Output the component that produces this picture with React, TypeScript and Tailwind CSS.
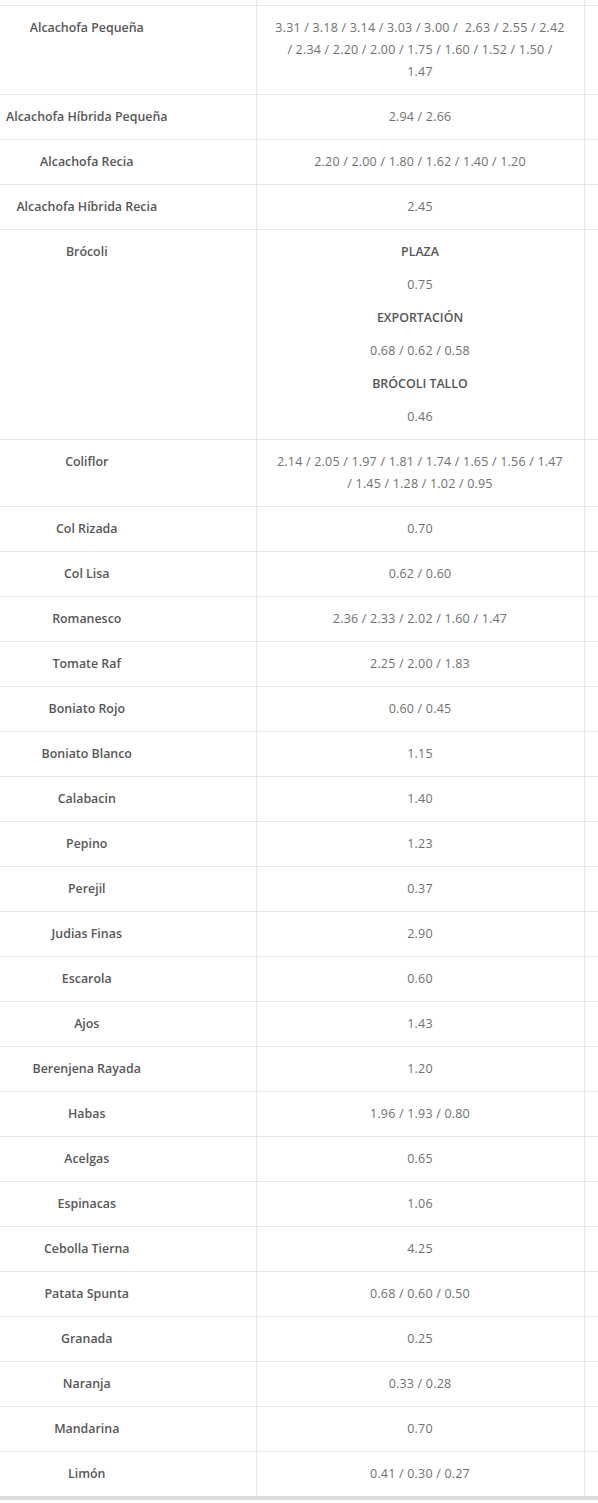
import React from "react";

type Row = { name: string; price: React.ReactNode };

const rows: Row[] = [
  {
    name: "Alcachofa Pequeña",
    price: "3.31 / 3.18 / 3.14 / 3.03 / 3.00 /\u00a0 2.63 / 2.55 / 2.42 / 2.34 / 2.20 / 2.00 / 1.75 / 1.60 / 1.52 / 1.50 / 1.47",
  },
  { name: "Alcachofa Híbrida Pequeña", price: "2.94 / 2.66" },
  { name: "Alcachofa Recia", price: "2.20 / 2.00 / 1.80 / 1.62 / 1.40 / 1.20" },
  { name: "Alcachofa Híbrida Recia", price: "2.45" },
  {
    name: "Brócoli",
    price: (
      <div className="flex flex-col gap-[11px]">
        <p className="font-semibold text-[12.4px] tracking-normal text-[#555]">PLAZA</p>
        <p>0.75</p>
        <p className="font-semibold text-[12.4px] tracking-normal text-[#555]">EXPORTACIÓN</p>
        <p>0.68 / 0.62 / 0.58</p>
        <p className="font-semibold text-[12.4px] tracking-normal text-[#555]">BRÓCOLI TALLO</p>
        <p>0.46</p>
      </div>
    ),
  },
  {
    name: "Coliflor",
    price: "2.14 / 2.05 / 1.97 / 1.81 / 1.74 / 1.65 / 1.56 / 1.47 / 1.45 / 1.28 / 1.02 / 0.95",
  },
  { name: "Col Rizada", price: "0.70" },
  { name: "Col Lisa", price: "0.62 / 0.60" },
  { name: "Romanesco", price: "2.36 / 2.33 / 2.02 / 1.60 / 1.47" },
  { name: "Tomate Raf", price: "2.25 / 2.00 / 1.83" },
  { name: "Boniato Rojo", price: "0.60 / 0.45" },
  { name: "Boniato Blanco", price: "1.15" },
  { name: "Calabacin", price: "1.40" },
  { name: "Pepino", price: "1.23" },
  { name: "Perejil", price: "0.37" },
  { name: "Judias Finas", price: "2.90" },
  { name: "Escarola", price: "0.60" },
  { name: "Ajos", price: "1.43" },
  { name: "Berenjena Rayada", price: "1.20" },
  { name: "Habas", price: "1.96 / 1.93 / 0.80" },
  { name: "Acelgas", price: "0.65" },
  { name: "Espinacas", price: "1.06" },
  { name: "Cebolla Tierna", price: "4.25" },
  { name: "Patata Spunta", price: "0.68 / 0.60 / 0.50" },
  { name: "Granada", price: "0.25" },
  { name: "Naranja", price: "0.33 / 0.28" },
  { name: "Mandarina", price: "0.70" },
  { name: "Limón", price: "0.41 / 0.30 / 0.27" },
];

export default function App() {
  return (
    <div className="w-[598px] h-[1503px] overflow-hidden bg-white font-['Open_Sans',sans-serif]">
      <table className="table-fixed border-collapse w-[684px] border-b-[4px] border-[#dcdcdc]">
        <colgroup>
          <col className="w-[256px]" />
          <col className="w-[328px]" />
          <col className="w-[100px]" />
        </colgroup>
        <tbody>
          {/* tail of the row above, cut off */}
          <tr className="h-[5px]">
            <td className="border-r border-b border-[#e6e6e6] p-0"></td>
            <td className="border-r border-b border-[#e6e6e6] p-0"></td>
            <td className="border-b border-[#e6e6e6] p-0"></td>
          </tr>
          {rows.map((row) => (
            <tr key={row.name}>
              <td className="align-top border-r border-b border-[#e6e6e6] pl-[6px] pr-[88px] py-[11px] text-center whitespace-nowrap text-[12.4px] leading-[22px] font-semibold text-[#575757]">
                {row.name}
              </td>
              <td className="align-top border-r border-b border-[#e6e6e6] px-[17px] py-[11px] text-center text-[12.5px] tracking-[0.2px] leading-[22px] text-[#707070]">
                {row.price}
              </td>
              <td className="border-b border-[#e6e6e6]"></td>
            </tr>
          ))}
        </tbody>
      </table>
    </div>
  );
}
